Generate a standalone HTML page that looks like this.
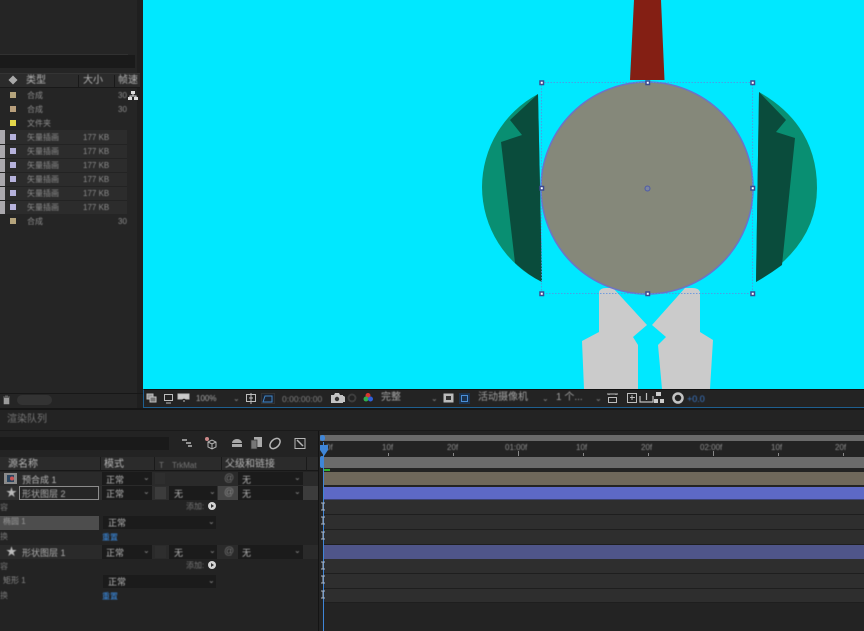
<!DOCTYPE html>
<html><head><meta charset="utf-8"><style>
html,body{margin:0;padding:0;background:#232323}
#r{position:relative;width:864px;height:631px;overflow:hidden;background:#232323;font-family:"Liberation Sans","Noto Sans CJK SC",sans-serif;color:#a8a8a8}
#r div{position:absolute;box-sizing:border-box}
.t{white-space:nowrap;line-height:12px;height:12px;font-size:9px;filter:blur(.45px)}
.s{color:#8d8d8d;font-size:8px}
.b{color:#b4b4b4;font-size:10px}
.m{color:#b4b4b4;font-size:9px}
.n{color:#aaa;font-size:9px}
.k{background:#1b1b1b}
</style></head><body><div id="r">

<!-- project panel -->
<div style="left:0;top:0;width:143px;height:408px;background:#252525"></div>
<div style="left:137px;top:0;width:6px;height:408px;background:#1f1f1f"></div>
<div style="left:0;top:54px;width:128px;height:1px;background:#313131"></div>
<div style="left:0;top:55px;width:135px;height:13px;background:#1a1a1a"></div>
<div style="left:0;top:73px;width:140px;height:15px;background:#2b2b2b;border-top:1px solid #343434;border-bottom:1px solid #191919"></div>
<div style="left:78px;top:75px;width:1px;height:12px;background:#191919"></div>
<div style="left:114px;top:75px;width:1px;height:12px;background:#191919"></div>
<div style="left:0;top:130px;width:127px;height:84px;background:#2c2c2c"></div>
<div style="left:0;top:130px;width:5px;height:84px;background:#aaa8ad"></div>
<div style="left:0;top:144px;width:127px;height:1px;background:#232323"></div>
<div style="left:0;top:158px;width:127px;height:1px;background:#232323"></div>
<div style="left:0;top:172px;width:127px;height:1px;background:#232323"></div>
<div style="left:0;top:186px;width:127px;height:1px;background:#232323"></div>
<div style="left:0;top:200px;width:127px;height:1px;background:#232323"></div>
<div style="left:9px;top:76px;width:8px;height:8px;background:#a9a9a9;transform:rotate(45deg) scale(.8)"></div>
<div class="t b" style="left:26px;top:75px">类型</div>
<div class="t b" style="left:83px;top:75px">大小</div>
<div class="t b" style="left:118px;top:75px">帧速</div>

<div style="left:10px;top:92px;width:6px;height:6px;background:#b5a47c"></div>
<div class="t s" style="left:27px;top:90px">合成</div><div class="t s" style="left:118px;top:90px">30</div>
<svg style="position:absolute;left:127px;top:90px" width="12" height="11"><path d="M4 1h4v3H4zM1 7h4v3H1zM7 7h4v3H7z" fill="#ddd"/><path d="M6 4v2M3 7V6h6v1" stroke="#ddd" fill="none"/></svg>
<div style="left:10px;top:106px;width:6px;height:6px;background:#b89f7c"></div>
<div class="t s" style="left:27px;top:104px">合成</div><div class="t s" style="left:118px;top:104px">30</div>
<div style="left:10px;top:120px;width:6px;height:6px;background:#e3d64a"></div>
<div class="t s" style="left:27px;top:118px">文件夹</div>

<div style="left:10px;top:134px;width:6px;height:6px;background:#b6b2dc"></div><div class="t s" style="left:27px;top:132px">矢量插画</div><div class="t s" style="left:83px;top:132px">177 KB</div>
<div style="left:10px;top:148px;width:6px;height:6px;background:#b6b2dc"></div><div class="t s" style="left:27px;top:146px">矢量插画</div><div class="t s" style="left:83px;top:146px">177 KB</div>
<div style="left:10px;top:162px;width:6px;height:6px;background:#b6b2dc"></div><div class="t s" style="left:27px;top:160px">矢量插画</div><div class="t s" style="left:83px;top:160px">177 KB</div>
<div style="left:10px;top:176px;width:6px;height:6px;background:#b6b2dc"></div><div class="t s" style="left:27px;top:174px">矢量插画</div><div class="t s" style="left:83px;top:174px">177 KB</div>
<div style="left:10px;top:190px;width:6px;height:6px;background:#b6b2dc"></div><div class="t s" style="left:27px;top:188px">矢量插画</div><div class="t s" style="left:83px;top:188px">177 KB</div>
<div style="left:10px;top:204px;width:6px;height:6px;background:#b6b2dc"></div><div class="t s" style="left:27px;top:202px">矢量插画</div><div class="t s" style="left:83px;top:202px">177 KB</div>
<div style="left:10px;top:218px;width:6px;height:6px;background:#b5a47c"></div>
<div class="t s" style="left:27px;top:216px">合成</div><div class="t s" style="left:118px;top:216px">30</div>

<div style="left:0;top:393px;width:143px;height:1px;background:#171717"></div>
<svg style="position:absolute;left:2px;top:395px" width="9" height="10"><path d="M1 2h7M3 1h3M2 3h5v6H2z" fill="#9a9a9a" stroke="#9a9a9a" stroke-width=".6"/></svg>
<div style="left:17px;top:395px;width:35px;height:10px;border-radius:5px;background:#333"></div>

<!-- viewer -->
<svg style="position:absolute;left:143px;top:0" width="721" height="389" viewBox="143 0 721 389">
<rect x="143" y="0" width="721" height="389" fill="#00e8ff"/>
<path d="M634 0H661L664.500 80H630Z" fill="#841f14"/>
<path d="M538 94A106 106 0 0 0 482 187 106 106 0 0 0 542 282Z" fill="#098f72"/>
<path d="M538 94 510 120 522 135 501 142 515 263 Q528 275 542 282Z" fill="#0a4c3c"/>
<path d="M759 92Q817 125 817 188 817 245 756 282Z" fill="#098f72"/>
<path d="M759 92 786 120 776 132 795 138 782 265 Q770 274 756 282Z" fill="#0a4c3c"/>
<path d="M599 294V292Q600 288 606 288H613L647 325 633 337 638 345V389H584L582 341 599 332Z" fill="#cbcbcb"/>
<path d="M700 294V292Q699 288 692 288H685L652 325 666 337 658 345 662 389H710L713 340 700 332Z" fill="#cbcbcb"/>
<circle cx="647" cy="188" r="106" fill="#85887a" stroke="#6b73c9" stroke-width="1.500"/>
<rect x="541.500" y="82.500" width="211" height="211" fill="none" stroke="#5b8fe0" stroke-width="1" stroke-dasharray="1.500 1.500" opacity=".8"/>
<g fill="#fff" stroke="#3d4a8f" stroke-width="1.500">
<rect x="540" y="81" width="3.500" height="3.500"/><rect x="646" y="81" width="3.500" height="3.500"/><rect x="751" y="81" width="3.500" height="3.500"/>
<rect x="540" y="186.500" width="3.500" height="3.500"/><rect x="751" y="186.500" width="3.500" height="3.500"/>
<rect x="540" y="292" width="3.500" height="3.500"/><rect x="646" y="292" width="3.500" height="3.500"/><rect x="751" y="292" width="3.500" height="3.500"/>
</g>
<circle cx="647.500" cy="188.500" r="2.500" fill="#7d86a0" stroke="#4d5aa6"/>
</svg>

<!-- viewer toolbar -->
<div style="left:143px;top:389px;width:721px;height:19px;background:#232323;border-left:1px solid #1f5f8f;border-bottom:1px solid #1f5f8f;border-top:1px solid #111"></div>
<svg style="position:absolute;left:146px;top:392px" width="200" height="13" fill="none" stroke="#bdbdbd">
<rect x="1" y="2" width="6" height="5" fill="#999"/><rect x="4" y="5" width="6" height="5" fill="#777"/>
<rect x="18.500" y="2.500" width="8" height="6"/><path d="M20 11h5"/>
<path d="M32 2h11v5h-3l-2-1-2 1h-4z" fill="#ccc"/><path d="M37 9h2"/>
<rect x="100.500" y="2.500" width="9" height="7"/><path d="M105 1v11M103 6h4"/>
<rect x="115.500" y="1.500" width="13" height="10" stroke="#333" fill="#1c2430"/><path d="M117 10l2-6h7v6z" stroke="#3f86c8"/>
<path d="M190 4h8l1 1v5h-10V5z" fill="#c4c4c4" stroke="none"/><circle cx="194" cy="7" r="2" fill="#333" stroke="none"/>
</svg>
<div class="t s" style="left:196px;top:393px;color:#a5a5a5">100%</div>
<div class="t s" style="left:233px;top:393px">⌄</div>
<div class="t s" style="left:282px;top:393px;color:#7f7f7f;font-size:8.500px">0:00:00:00</div>
<svg style="position:absolute;left:330px;top:391px" width="45" height="14"><path d="M1 4h3l1-2h4l1 2h3v8H1z" fill="#c4c4c4"/><circle cx="7" cy="8" r="2.200" fill="#333"/><circle cx="22" cy="7" r="3.500" fill="none" stroke="#3d3d3d" stroke-width="2"/><circle cx="38" cy="4.500" r="2.500" fill="#d8372f"/><circle cx="36" cy="8" r="2.500" fill="#2fae4f"/><circle cx="40.500" cy="8" r="2.500" fill="#2f5fd8"/></svg>
<div class="t b" style="left:381px;top:392px;color:#a8a8a8">完整</div>
<div class="t s" style="left:431px;top:393px">⌄</div>
<svg style="position:absolute;left:442px;top:392px" width="30" height="13"><rect x="1.500" y="1.500" width="10" height="9" fill="#bbb"/><rect x="4" y="4" width="5" height="4" fill="#333"/><rect x="17" y="1" width="11" height="11" fill="#1b3350"/><rect x="19.500" y="3.500" width="6" height="6" fill="none" stroke="#4a8fd8"/></svg>
<div class="t b" style="left:478px;top:392px;color:#a0a0a0">活动摄像机</div>
<div class="t s" style="left:542px;top:393px">⌄</div>
<div class="t b" style="left:556px;top:392px;color:#a0a0a0">1 个...</div>
<div class="t s" style="left:595px;top:393px">⌄</div>
<svg style="position:absolute;left:605px;top:391px" width="95" height="14" fill="none" stroke="#bdbdbd">
<path d="M2 3h11M4 3v1M11 3v1M3.500 6.500h8v5h-8z"/>
<rect x="22.500" y="2.500" width="9" height="9"/><path d="M27 4v5M25 6.500h5"/>
<path d="M35 5v6h13V5M41.500 2v7" stroke-width="1.200"/>
<path d="M51 1h5v4h-5zM49 8h4v4h-4zM55 8h4v4h-4z" fill="#ccc" stroke="none"/>
<circle cx="73" cy="7" r="4.500" stroke-width="2.500" stroke="#c4c4c4"/>
</svg>
<div class="t s" style="left:687px;top:393px;color:#3a78c8;font-size:9px">+0.0</div>

<!-- composition panel tab -->
<div style="left:0;top:408px;width:864px;height:2px;background:#161616"></div>
<div class="t b" style="left:7px;top:414px;color:#777">渲染队列</div>
<div style="left:0;top:430px;width:864px;height:1px;background:#1a1a1a"></div>

<!-- search and icons -->
<div style="left:0;top:437px;width:169px;height:13px;background:#1a1a1a"></div>
<svg style="position:absolute;left:180px;top:436px" width="130" height="15" fill="none" stroke="#b5b5b5">
<path d="M2 4h5M6 7h5M8 10h4" stroke-width="1.500"/>
<path d="M28 6l4-2 4 2v5l-4 2-4-2zM28 6l4 2 4-2M32 8v5"/><circle cx="27" cy="3" r="2" fill="#c88" stroke="none"/>
<path d="M52 7a5 4 0 0 1 10 0zM52 8h10v3H52z" fill="#a8a8a8" stroke="none"/>
<rect x="74" y="1" width="8" height="10" fill="#aaa" stroke="none"/><rect x="71" y="4" width="6" height="9" fill="#777" stroke="#333" stroke-width=".7"/>
<ellipse cx="95" cy="7.500" rx="6" ry="4" transform="rotate(-45 95 7.500)" stroke-width="1.500"/>
<rect x="115" y="2.500" width="10" height="10"/><path d="M117 4l6 6" stroke-width="1.500"/>
</svg>

<!-- layer table -->
<div style="left:0;top:457px;width:318px;height:14px;background:#2b2b2b;border-bottom:1px solid #181818"></div>
<div style="left:100px;top:457px;width:1px;height:14px;background:#1a1a1a"></div>
<div style="left:154px;top:457px;width:1px;height:14px;background:#1a1a1a"></div>
<div style="left:221px;top:457px;width:1px;height:14px;background:#1a1a1a"></div>
<div style="left:306px;top:457px;width:1px;height:14px;background:#1a1a1a"></div>
<div class="t b" style="left:8px;top:459px">源名称</div>
<div class="t b" style="left:104px;top:459px">模式</div>
<div class="t s" style="left:159px;top:460px;color:#777">T</div>
<div class="t s" style="left:172px;top:460px;color:#777">TrkMat</div>
<div class="t b" style="left:225px;top:459px">父级和链接</div>

<!-- row1 -->
<div style="left:0;top:472px;width:318px;height:14px;background:#2a2a2a"></div>
<svg style="position:absolute;left:4px;top:473px" width="13" height="11"><rect width="13" height="11" fill="#8a8a8a"/><rect x="3" y="2" width="7" height="7" fill="#2a4560"/><circle cx="8" cy="5.500" r="2" fill="#c55"/></svg>
<div class="t n" style="left:22px;top:474px;color:#b5b5b5">预合成 1</div>
<div class="k" style="left:102px;top:472px;width:50px;height:13px"></div>
<div class="t m" style="left:106px;top:474px">正常</div><div class="t s" style="left:143px;top:472px">⌄</div>
<div style="left:155px;top:473px;width:10px;height:11px;background:#2e2e2e"></div>
<div class="k" style="left:238px;top:472px;width:65px;height:13px"></div>
<div class="t m" style="left:242px;top:474px">无</div><div class="t s" style="left:294px;top:472px">⌄</div>
<div class="t s" style="left:224px;top:473px;font-size:10px;color:#777">@</div>

<!-- row2 -->
<div style="left:0;top:486px;width:318px;height:14px;background:#2e2e2e"></div>
<div style="left:303px;top:486px;width:15px;height:14px;background:#3c3c3c"></div>
<div class="t b" style="left:6px;top:487px;font-size:11px;color:#bbb">★</div>
<div style="left:19px;top:486px;width:80px;height:14px;border:1px solid #8c8c8c;background:#262626"></div>
<div class="t n" style="left:22px;top:488px">形状图层 2</div>
<div class="k" style="left:102px;top:486px;width:50px;height:14px"></div>
<div class="t m" style="left:106px;top:488px">正常</div><div class="t s" style="left:143px;top:486px">⌄</div>
<div style="left:155px;top:487px;width:11px;height:12px;background:#3c3c3c"></div>
<div class="k" style="left:169px;top:486px;width:48px;height:14px"></div>
<div class="t m" style="left:174px;top:488px">无</div><div class="t s" style="left:209px;top:486px">⌄</div>
<div style="left:218px;top:486px;width:20px;height:14px;background:#454545"></div>
<div class="t s" style="left:224px;top:487px;font-size:10px;color:#8a8a8a">@</div>
<div class="k" style="left:238px;top:486px;width:65px;height:14px"></div>
<div class="t m" style="left:242px;top:488px">无</div><div class="t s" style="left:294px;top:486px">⌄</div>

<div class="t s" style="left:0;top:502px;color:#777">容</div>
<div class="t s" style="left:186px;top:501px;color:#777">添加:</div>
<div style="left:208px;top:502px;width:8px;height:8px;border-radius:50%;background:#d5d5d5"></div>
<div style="left:211px;top:504px;width:0;height:0;border-left:3px solid #333;border-top:2px solid transparent;border-bottom:2px solid transparent"></div>

<div style="left:0;top:516px;width:99px;height:14px;background:#4d4d4d"></div>
<div class="t s" style="left:3px;top:516px;color:#999">椭圆 1</div>
<div class="k" style="left:103px;top:516px;width:113px;height:13px"></div>
<div class="t m" style="left:108px;top:517px">正常</div><div class="t s" style="left:208px;top:516px">⌄</div>
<div class="t s" style="left:0;top:531px;color:#777">换</div>
<div class="t s" style="left:102px;top:532px;color:#3b8fe8">重置</div>

<!-- row3 -->
<div style="left:0;top:545px;width:318px;height:14px;background:#2a2a2a"></div>
<div class="t b" style="left:6px;top:546px;font-size:11px;color:#bbb">★</div>
<div class="t n" style="left:22px;top:547px">形状图层 1</div>
<div class="k" style="left:102px;top:545px;width:50px;height:14px"></div>
<div class="t m" style="left:106px;top:547px">正常</div><div class="t s" style="left:143px;top:545px">⌄</div>
<div style="left:155px;top:546px;width:11px;height:12px;background:#2e2e2e"></div>
<div class="k" style="left:169px;top:545px;width:48px;height:14px"></div>
<div class="t m" style="left:174px;top:547px">无</div><div class="t s" style="left:209px;top:545px">⌄</div>
<div class="t s" style="left:224px;top:546px;font-size:10px;color:#777">@</div>
<div class="k" style="left:238px;top:545px;width:65px;height:14px"></div>
<div class="t m" style="left:242px;top:547px">无</div><div class="t s" style="left:294px;top:545px">⌄</div>

<div class="t s" style="left:0;top:561px;color:#777">容</div>
<div class="t s" style="left:186px;top:560px;color:#777">添加:</div>
<div style="left:208px;top:561px;width:8px;height:8px;border-radius:50%;background:#d5d5d5"></div>
<div style="left:211px;top:563px;width:0;height:0;border-left:3px solid #333;border-top:2px solid transparent;border-bottom:2px solid transparent"></div>
<div class="t s" style="left:3px;top:575px;color:#8a8a8a">矩形 1</div>
<div class="k" style="left:103px;top:575px;width:113px;height:13px"></div>
<div class="t m" style="left:108px;top:576px">正常</div><div class="t s" style="left:208px;top:575px">⌄</div>
<div class="t s" style="left:0;top:590px;color:#777">换</div>
<div class="t s" style="left:102px;top:591px;color:#3b8fe8">重置</div>

<!-- timeline -->
<div style="left:318px;top:431px;width:546px;height:200px;background:#232323"></div>
<div style="left:318px;top:431px;width:1px;height:200px;background:#141414"></div>
<div style="left:320px;top:435px;width:544px;height:6px;background:#6a6a6a"></div>
<div style="left:320px;top:435px;width:5px;height:6px;background:#3f86d8;border-radius:3px"></div>
<div style="left:324px;top:457px;width:540px;height:11px;background:#6b6b6b"></div>
<div style="left:320px;top:456px;width:4px;height:12px;background:#3f86d8;border-radius:2px"></div>
<div style="left:324px;top:469px;width:6px;height:2px;background:#2fb52f"></div>
<div style="left:324px;top:472px;width:540px;height:13px;background:#6f685b"></div>
<div style="left:324px;top:487px;width:540px;height:13px;background:#5d69c6;border-bottom:1px solid #3c4270"></div>
<div style="left:324px;top:500px;width:540px;height:45px;background:#2e2e2e"></div>
<div style="left:324px;top:514px;width:540px;height:1px;background:#1e1e1e"></div>
<div style="left:324px;top:529px;width:540px;height:1px;background:#1e1e1e"></div>
<div style="left:324px;top:544px;width:540px;height:1px;background:#1e1e1e"></div>
<div style="left:324px;top:545px;width:540px;height:14px;background:#4f5589"></div>
<div style="left:324px;top:559px;width:540px;height:44px;background:#2e2e2e"></div>
<div style="left:324px;top:573px;width:540px;height:1px;background:#1e1e1e"></div>
<div style="left:324px;top:588px;width:540px;height:1px;background:#1e1e1e"></div>
<div style="left:324px;top:602px;width:540px;height:1px;background:#1e1e1e"></div>

<div class="t s" style="left:326px;top:442px">0f</div>
<div class="t s" style="left:382px;top:442px">10f</div>
<div class="t s" style="left:447px;top:442px">20f</div>
<div class="t s" style="left:505px;top:442px">01:00f</div>
<div class="t s" style="left:576px;top:442px">10f</div>
<div class="t s" style="left:641px;top:442px">20f</div>
<div class="t s" style="left:700px;top:442px">02:00f</div>
<div class="t s" style="left:771px;top:442px">10f</div>
<div class="t s" style="left:835px;top:442px">20f</div>
<div style="left:388px;top:453px;width:1px;height:3px;background:#888"></div>
<div style="left:453px;top:453px;width:1px;height:3px;background:#888"></div>
<div style="left:518px;top:451px;width:1px;height:5px;background:#888"></div>
<div style="left:583px;top:453px;width:1px;height:3px;background:#888"></div>
<div style="left:648px;top:453px;width:1px;height:3px;background:#888"></div>
<div style="left:713px;top:451px;width:1px;height:5px;background:#888"></div>
<div style="left:778px;top:453px;width:1px;height:3px;background:#888"></div>
<div style="left:843px;top:453px;width:1px;height:3px;background:#888"></div>

<div style="left:323px;top:442px;width:1px;height:189px;background:#3f86d8"></div>
<div style="left:320px;top:445px;width:8px;height:5px;background:#3f86d8"></div>
<div style="left:320px;top:450px;width:0;height:0;border-left:4px solid transparent;border-right:4px solid transparent;border-top:6px solid #3f86d8"></div>

<svg style="position:absolute;left:320px;top:500px" width="7" height="100" fill="none" stroke="#a9b4c4" stroke-width="1">
<path d="M1 3h4M3 3v7M1 10h4M1 17h4M3 17v7M1 24h4M1 32h4M3 32v7M1 39h4M1 62h4M3 62v7M1 69h4M1 76h4M3 76v7M1 83h4M1 91h4M3 91v7M1 98h4"/>
</svg>
</div></body></html>
